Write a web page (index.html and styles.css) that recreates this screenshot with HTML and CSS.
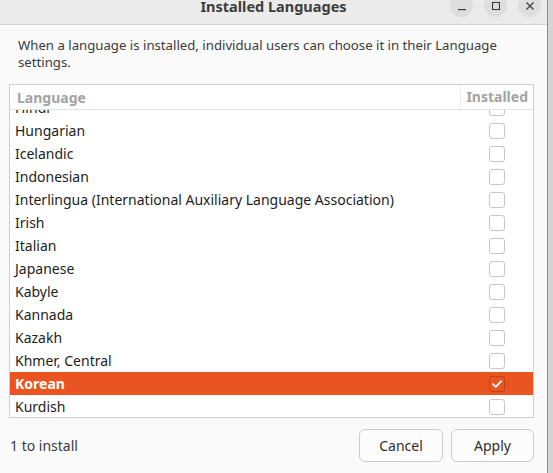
FILE: index.html
```html
<!DOCTYPE html>
<html>
<head>
<meta charset="utf-8">
<title>Installed Languages</title>
<link rel="stylesheet" href="styles.css">
</head>
<body>
<div class="window">
  <header class="titlebar">
    <span class="title">Installed Languages</span>
    <div class="controls">
      <span class="ctl">
        <svg width="16" height="16" viewBox="0 0 16 16"><rect x="4" y="11" width="8" height="1.2" fill="#3d3d3d"/></svg>
      </span>
      <span class="ctl">
        <svg width="16" height="16" viewBox="0 0 16 16"><rect x="4.5" y="4.5" width="7" height="7" fill="none" stroke="#3d3d3d" stroke-width="1.1"/></svg>
      </span>
      <span class="ctl">
        <svg width="16" height="16" viewBox="0 0 16 16"><path d="M4.5 4.5 L11.5 11.5 M11.5 4.5 L4.5 11.5" stroke="#3d3d3d" stroke-width="1.2"/></svg>
      </span>
    </div>
  </header>
  <main class="content">
    <p class="desc">When a language is installed, individual users can choose it in their Language settings.</p>
    <div class="list">
      <div class="list-head">
        <span class="col-lang">Language</span>
        <span class="col-inst">Installed</span>
      </div>
      <div class="list-body">
        <div class="rows">
          <div class="row"><span class="name">Hindi</span><span class="check"><span class="box"></span></span></div>
          <div class="row"><span class="name">Hungarian</span><span class="check"><span class="box"></span></span></div>
          <div class="row"><span class="name">Icelandic</span><span class="check"><span class="box"></span></span></div>
          <div class="row"><span class="name">Indonesian</span><span class="check"><span class="box"></span></span></div>
          <div class="row"><span class="name">Interlingua (International Auxiliary Language Association)</span><span class="check"><span class="box"></span></span></div>
          <div class="row"><span class="name">Irish</span><span class="check"><span class="box"></span></span></div>
          <div class="row"><span class="name">Italian</span><span class="check"><span class="box"></span></span></div>
          <div class="row"><span class="name">Japanese</span><span class="check"><span class="box"></span></span></div>
          <div class="row"><span class="name">Kabyle</span><span class="check"><span class="box"></span></span></div>
          <div class="row"><span class="name">Kannada</span><span class="check"><span class="box"></span></span></div>
          <div class="row"><span class="name">Kazakh</span><span class="check"><span class="box"></span></span></div>
          <div class="row"><span class="name">Khmer, Central</span><span class="check"><span class="box"></span></span></div>
          <div class="row selected"><span class="name">Korean</span><span class="check"><span class="box checked"><svg width="16" height="16" viewBox="0 0 16 16"><path d="M4 8.2 L6.8 10.8 L12 5.4" fill="none" stroke="#fff" stroke-width="1.8" stroke-linecap="round" stroke-linejoin="round"/></svg></span></span></div>
          <div class="row"><span class="name">Kurdish</span><span class="check"><span class="box"></span></span></div>
        </div>
      </div>
    </div>
    <footer class="actions">
      <span class="status">1 to install</span>
      <div class="buttons">
        <button class="btn cancel">Cancel</button>
        <button class="btn apply">Apply</button>
      </div>
    </footer>
  </main>
</div>
</body>
</html>
```
FILE: styles.css
```css
html, body {
  margin: 0;
  padding: 0;
}
body {
  background: #d4d4d4;
  font-family: "Noto Sans", "DejaVu Sans", sans-serif;
  color: #1d1d1d;
  width: 553px;
  height: 473px;
  overflow: hidden;
}
.window {
  width: 547px;
  height: 473px;
  background: #fafafa;
  border-right: 1px solid #8e8e8e;
  display: flex;
  flex-direction: column;
  overflow: hidden;
}
.titlebar {
  height: 24px;
  flex: none;
  background: #ebebeb;
  border-bottom: 1px solid #d3d3d3;
  display: flex;
  align-items: flex-start;
  justify-content: center;
  position: relative;
}
.title {
  font-weight: 700;
  font-size: 14.5px;
  line-height: 13px;
  color: #3d3d3d;
}
.controls {
  position: absolute;
  right: 6px;
  top: -6px;
  display: flex;
  gap: 11px;
}
.ctl {
  width: 23px;
  height: 23px;
  border-radius: 50%;
  background: #dedede;
  display: flex;
  align-items: center;
  justify-content: center;
}
.ctl svg { display: block; }
.content {
  flex: 1;
  display: flex;
  flex-direction: column;
  padding: 12px 13px 0 9px;
}
.desc {
  margin: 0 0 0 9px;
  font-size: 13.2px;
  line-height: 17px;
  color: #3b3b3b;
  max-width: 500px;
}
.list {
  margin-top: 13px;
  height: 332px;
  flex: none;
  border: 1px solid #cfcfcf;
  background: #ffffff;
  display: flex;
  flex-direction: column;
}
.list-head {
  height: 24px;
  flex: none;
  border-bottom: 1px solid #e2e2e2;
  display: flex;
  align-items: center;
  font-size: 14px;
  font-weight: 700;
  color: #a3a3a3;
}
.col-lang {
  flex: 1;
  padding-left: 7px;
}
.col-inst {
  width: 73px;
  box-sizing: border-box;
  height: 100%;
  border-left: 1px solid #ececec;
  text-align: right;
  padding-right: 5px;
  line-height: 24px;
}
.list-body {
  flex: 1;
  overflow: hidden;
}
.rows {
  margin-top: -14px;
}
.row {
  height: 23px;
  display: flex;
  align-items: center;
  font-size: 14px;
}
.name {
  flex: 1;
  padding-left: 5px;
  white-space: nowrap;
}
.check {
  width: 73px;
  display: flex;
  justify-content: center;
}
.box {
  width: 14px;
  height: 14px;
  border: 1px solid #c6c6c6;
  border-radius: 3px;
  background: #ffffff;
  display: flex;
  align-items: center;
  justify-content: center;
}
.box svg { display: block; flex: none; }
.row.selected {
  background: #e95420;
  color: #ffffff;
}
.row.selected .name { font-weight: 700; }
.box.checked {
  background: #e95420;
  border-color: #b8441b;
}
.actions {
  flex: none;
  display: flex;
  align-items: center;
  justify-content: space-between;
  padding: 11px 0 13px 0;
}
.status {
  font-size: 14px;
  color: #3b3b3b;
  padding-left: 1px;
}
.buttons {
  display: flex;
  gap: 8px;
}
.btn {
  font-family: "Noto Sans", "DejaVu Sans", sans-serif;
  font-size: 14px;
  color: #2e2e2e;
  height: 33px;
  background: #fcfcfc;
  border: 1px solid #cdcdcd;
  border-radius: 6px;
  padding: 0;
}
.cancel { width: 84px; }
.apply { width: 83px; }
```
